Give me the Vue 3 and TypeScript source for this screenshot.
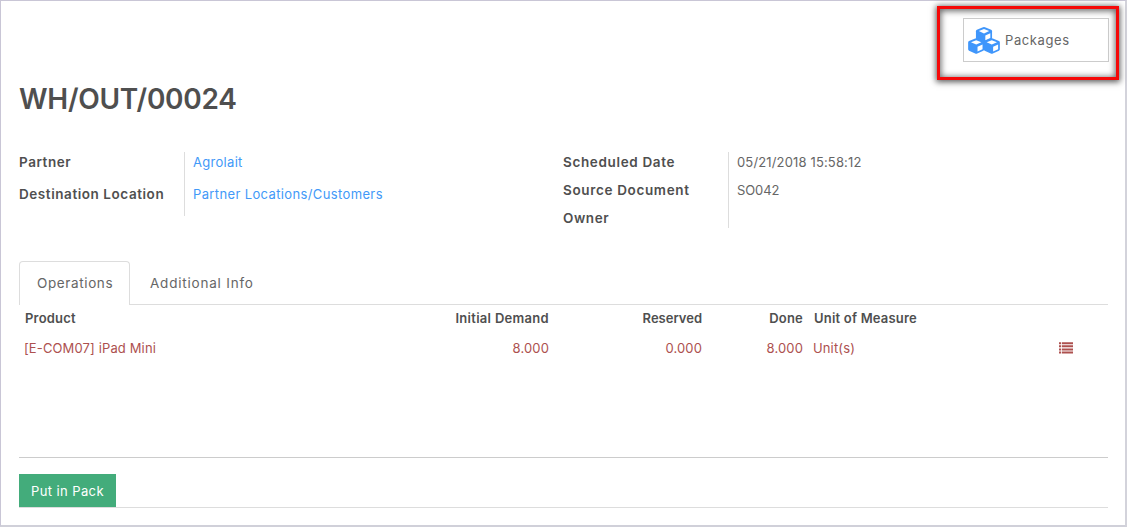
<script setup lang="ts">
interface Field {
  label: string
  value: string
  cls: string
}

const shipping: Field[] = [
  { label: 'Partner', value: 'Agrolait', cls: 'f-partner' },
  { label: 'Destination Location', value: 'Partner Locations/Customers', cls: 'f-dest' },
]
const schedule: Field[] = [
  { label: 'Scheduled Date', value: '05/21/2018 15:58:12', cls: 'f-date' },
  { label: 'Source Document', value: 'SO042', cls: 'f-source' },
  { label: 'Owner', value: '', cls: 'f-owner' },
]
const cubes = [
  { x: 16, y: 1.1 },
  { x: 8.2, y: 12.3 },
  { x: 23.8, y: 12.3 },
]
</script>

<template>
  <main class="sheet">
    <div class="stat-area">
      <button class="stat">
        <svg class="cubes" viewBox="0 0 32 27" width="32" height="27">
          <g v-for="c in cubes" :key="c.x" :transform="`translate(${c.x} ${c.y}) scale(1.02 1.08)`">
            <path class="cube" d="M-1-.8Q0-1.2 1-.8L7 1.6Q7.9 2 7.9 3V9.3Q7.9 10.2 7 10.6L1 13.1Q0 13.5-1 13.1L-7 10.6Q-7.9 10.2-7.9 9.3V3Q-7.9 2-7 1.6Z" />
            <path class="face" d="M0 .8L5.1 2.8L0 4.9L-5.1 2.8ZM1.3 6.8L6.2 4.8V9.1L1.3 11.2Z" />
          </g>
        </svg>
        <span>Packages</span>
      </button>
      <div class="highlight"></div>
    </div>

    <h1>WH/OUT/00024</h1>

    <section class="groups">
      <dl class="group left">
        <div v-for="f in shipping" :key="f.label" class="row" :class="f.cls">
          <dt>{{ f.label }}</dt>
          <dd><a>{{ f.value }}</a></dd>
        </div>
      </dl>
      <dl class="group right">
        <div v-for="f in schedule" :key="f.label" class="row" :class="f.cls">
          <dt>{{ f.label }}</dt>
          <dd>{{ f.value }}</dd>
        </div>
      </dl>
    </section>

    <nav class="tabs">
      <a class="tab active">Operations</a>
      <a class="tab info">Additional Info</a>
    </nav>

    <table>
      <colgroup>
        <col class="c1" /><col class="c2" /><col class="c3" /><col class="c4" /><col class="c5" /><col />
      </colgroup>
      <thead>
        <tr>
          <th class="product">Product</th>
          <th class="num demand">Initial Demand</th>
          <th class="num reserved">Reserved</th>
          <th class="num">Done</th>
          <th class="uom">Unit of Measure</th>
          <th></th>
        </tr>
      </thead>
      <tbody>
        <tr>
          <td class="name">[E-COM07] iPad Mini</td>
          <td class="num">8.000</td>
          <td class="num">0.000</td>
          <td class="num">8.000</td>
          <td class="unit">Unit(s)</td>
          <td class="action">
            <svg width="14" height="12" viewBox="0 0 14 12">
              <path d="M0 .2h2.2v2H0zM3 .2h11v2H3zM0 3.3h2.2v2H0zM3 3.3h11v2H3zM0 6.4h2.2v2H0zM3 6.4h11v2H3zM0 9.5h2.2v2H0zM3 9.5h11v2H3z" />
            </svg>
          </td>
        </tr>
      </tbody>
    </table>

    <footer>
      <button class="pack">Put in Pack</button>
    </footer>
  </main>
</template>

<style>
body {
  background: #fff;
}
</style>

<style scoped>
* {
  box-sizing: border-box;
}
.sheet {
  display: flex;
  flex-direction: column;
  width: 1127px;
  height: 527px;
  padding: 0 17px 0 18px;
  border: 1px solid #c9c6d6;
  border-right: 2px solid #d3d3db;
  border-bottom: 2px solid #d0d0d9;
  background: #fff;
  color: #555;
  font: 13px/20px Inter, "Liberation Sans", sans-serif;
  letter-spacing: 0.3px;
}
.stat-area {
  position: relative;
  display: flex;
  justify-content: flex-end;
  height: 78px;
  padding-top: 17px;
}
.stat {
  display: flex;
  align-items: center;
  width: 146px;
  height: 44px;
  margin-right: -1px;
  padding: 0 0 0 4px;
  border: 1px solid #ccc;
  background: #fff;
  color: #666;
  font: inherit;
  letter-spacing: 0.6px;
}
.stat span {
  margin-left: 5px;
}
.cube {
  fill: #3f96fb;
}
.face {
  fill: #fff;
}
.highlight {
  position: absolute;
  top: 5px;
  right: -11px;
  width: 182px;
  height: 74px;
  border: 3px solid #f50808;
  box-shadow: 0 1px 6px 1px rgba(0, 0, 0, 0.65), inset 0 1px 6px 1px rgba(0, 0, 0, 0.6);
}
h1 {
  height: 73px;
  margin: 0;
  color: #4f4f4f;
  font-size: 28px;
  font-weight: 600;
  line-height: 40px;
  letter-spacing: -0.28px;
}
.groups {
  display: flex;
  height: 109px;
}
.group {
  width: 544px;
  flex: none;
  margin: 0;
}
.row {
  display: flex;
  height: 28px;
}
.left .row {
  height: 32px;
}
dt {
  width: 166px;
  border-right: 1px solid #ddd;
  color: #4f4f4f;
  font-size: 13.5px;
  font-weight: 600;
  letter-spacing: 0.56px;
}
.right dt {
  width: 166px;
}
.f-date dt,
.f-source dt {
  letter-spacing: 0.65px;
}
dd {
  margin: 0;
  padding-left: 8px;
  color: #666;
}
.f-dest dd {
  letter-spacing: 0.37px;
}
.f-date dd {
  letter-spacing: 0.15px;
}
.f-source dd {
  letter-spacing: -0.1px;
}
.left dd {
  color: #4299f8;
}
.right {
  height: 76px;
}
.right .row:last-child {
  height: 20px;
}
.tabs {
  display: flex;
  height: 44px;
  border-bottom: 1px solid #ddd;
}
.tab {
  color: #666;
  font-size: 13.5px;
}
.active {
  width: 111px;
  height: 44px;
  padding-top: 11px;
  padding-left: 17px;
  border: 1px solid #ddd;
  border-bottom: 0;
  border-radius: 4px 4px 0 0;
  background: #fff;
  letter-spacing: 0.62px;
}
.info {
  padding-top: 12px;
  padding-left: 20px;
  letter-spacing: 0.79px;
}
table {
  width: 1088px;
  margin-top: -1px;
  table-layout: fixed;
  border-collapse: collapse;
}
.c1 { width: 370px; }
.c2 { width: 160px; }
.c3 { width: 153px; }
.c4 { width: 101px; }
.c5 { width: 200px; }
th,
td {
  padding: 0;
  font-weight: 400;
  text-align: left;
  white-space: nowrap;
}
th {
  height: 28px;
  color: #4f4f4f;
  font-weight: 600;
  letter-spacing: 0.2px;
}
td {
  height: 32px;
  color: #ad514f;
  letter-spacing: 0.13px;
}
th.product { padding-left: 6px; }
td.name { padding-left: 5px; }
th.num,
td.num { text-align: right; }
th.demand { letter-spacing: 0.3px; }
th.reserved { letter-spacing: 0; }
th.uom { padding-left: 11px; }
td.unit { padding-left: 10px; }
.action {
  padding-left: 56px;
}
.action svg {
  display: block;
  fill: #ad514f;
}
footer {
  height: 51px;
  margin: auto 0 17px 0;
  padding-top: 16px;
  border-top: 1px solid #ccc;
  border-bottom: 1px solid #ddd;
}
.pack {
  display: block;
  width: 97px;
  height: 33px;
  padding: 0;
  border: 0;
  background: #43ac7b;
  color: #fff;
  font: inherit;
  letter-spacing: 0.4px;
}
</style>
